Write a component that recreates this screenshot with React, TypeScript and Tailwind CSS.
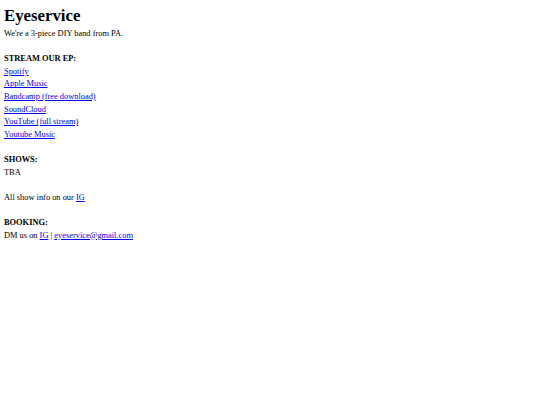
import React from "react";

const links = [
  "Spotify",
  "Apple Music",
  "Bandcamp (free download)",
  "SoundCloud",
  "YouTube (full stream)",
  "Youtube Music",
];

function A({ children }: { children: React.ReactNode }) {
  return <a href="#" className="text-[#0000ee] underline">{children}</a>;
}

export default function App() {
  return (
    <div className="min-h-[405px] bg-white px-[4px] pt-[4px] text-black text-[8.4px] leading-[12.6px]" style={{ fontFamily: '"Liberation Serif", serif' }}>
      <h1 className="text-[16.8px] font-bold leading-[24px]">Eyeservice</h1>
      <div>We're a 3-piece DIY band from PA.</div>
      <div className="h-[12.6px]" />
      <div className="font-bold">STREAM OUR EP:</div>
      {links.map((l) => (
        <div key={l}><A>{l}</A></div>
      ))}
      <div className="h-[12.6px]" />
      <div className="font-bold">SHOWS:</div>
      <div>TBA</div>
      <div className="h-[12.6px]" />
      <div>All show info on our <A>IG</A></div>
      <div className="h-[12.6px]" />
      <div className="font-bold">BOOKING:</div>
      <div>DM us on <A>IG</A> | <A>eyeservice@gmail.com</A></div>
    </div>
  );
}
